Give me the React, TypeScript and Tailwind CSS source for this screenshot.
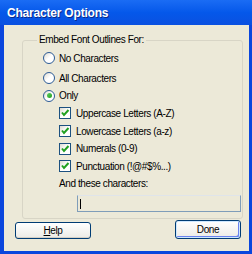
const FONT = { fontFamily: '"Liberation Sans", Arial, sans-serif' };

const Radio = ({ checked = false, label }: { checked?: boolean; label: string }) => (
    <div className="flex items-center gap-[4px]">
        <span className="flex h-[12px] w-[12px] items-center justify-center rounded-full border border-[#2c5b96] bg-gradient-to-br from-[#dcdad0] via-white to-white">
            {checked ? (
                <span className="h-[5px] w-[5px] rounded-full bg-gradient-to-br from-[#5fd35f] to-[#1a9a1a]" />
            ) : null}
        </span>
        <span>{label}</span>
    </div>
);

const Check = ({ label }: { label: string }) => (
    <div className="flex items-center gap-[5px]">
        <span className="flex h-[12px] w-[12px] items-center justify-center border border-[#1c5180] bg-gradient-to-br from-[#dcdad0] via-white to-white">
            <svg width="10" height="10" viewBox="0 0 10 10">
                <polyline
                    points="2,4.5 4,7 8.5,2"
                    fill="none"
                    stroke="#21a121"
                    strokeWidth="2"
                />
            </svg>
        </span>
        <span>{label}</span>
    </div>
);

export default function App() {
    return (
        <div
            className="flex h-[254px] w-[252px] flex-col overflow-hidden bg-[#0a46dd] text-[10px] tracking-[-0.4px] text-black"
            style={FONT}
        >
            {/* Title bar */}
            <div className="flex h-[25px] shrink-0 items-center bg-gradient-to-b from-[#1a6cf4] via-[#0558ea] to-[#0a50e0] pl-[7px]">
                <span className="text-[12px] font-bold tracking-[-0.2px] text-white [text-shadow:1px_1px_0_#0a2a8a]">
                    Character Options
                </span>
            </div>

            {/* Body */}
            <div className="mb-[3px] ml-[4px] mr-[3px] flex flex-1 flex-col bg-[#ece9d8]">
                <div className="relative ml-[18px] mt-[15px] h-[179px] w-[221px] rounded-[3px] border border-[#d8d5c6]">
                    <span className="absolute left-[14px] top-[-7px] bg-[#ece9d8] px-[2px] leading-[12px]">
                        Embed Font Outlines For:
                    </span>

                    <div className="flex flex-col pl-[20px] pt-[7px]">
                        <div className="flex h-[20px] items-center">
                            <Radio label="No Characters" />
                        </div>
                        <div className="flex h-[20px] items-center">
                            <Radio label="All Characters" />
                        </div>
                        <div className="flex h-[15px] items-center">
                            <Radio checked label="Only" />
                        </div>

                        <div className="mt-[1px] flex flex-col pl-[16px]">
                            <div className="flex h-[18px] items-center">
                                <Check label="Uppercase Letters (A-Z)" />
                            </div>
                            <div className="flex h-[18px] items-center">
                                <Check label="Lowercase Letters (a-z)" />
                            </div>
                            <div className="flex h-[17px] items-center">
                                <Check label="Numerals (0-9)" />
                            </div>
                            <div className="flex h-[18px] items-center">
                                <Check label="Punctuation (!@#$%...)" />
                            </div>
                            <div className="flex h-[16px] items-center">
                                And these characters:
                            </div>
                            <div className="ml-[18px] mt-[4px] flex h-[17px] w-[164px] items-center border border-[#7f9db9] border-t-[#dfe4ea] bg-[#ece9d8] pl-[2px]">
                                <span className="h-[10px] w-[1px] bg-black" />
                            </div>
                        </div>
                    </div>
                </div>

                <div className="mt-[1px] flex items-end justify-between pl-[11px] pr-[8px]">
                    <button className="flex h-[17px] w-[76px] items-center justify-center rounded-[3px] border border-[#003c74] bg-gradient-to-b from-white to-[#ecebe6] shadow-[inset_0_-1px_0_#d6d0c5]">
                        <span>
                            <span className="underline">H</span>elp
                        </span>
                    </button>
                    <button className="flex h-[19px] w-[66px] items-center justify-center rounded-[3px] border border-[#003c74] bg-gradient-to-b from-white to-[#ecebe6] shadow-[inset_0_0_0_1px_#cee7ff,inset_-2px_-2px_0_#6982ee]">
                        Done
                    </button>
                </div>
            </div>
        </div>
    );
}
